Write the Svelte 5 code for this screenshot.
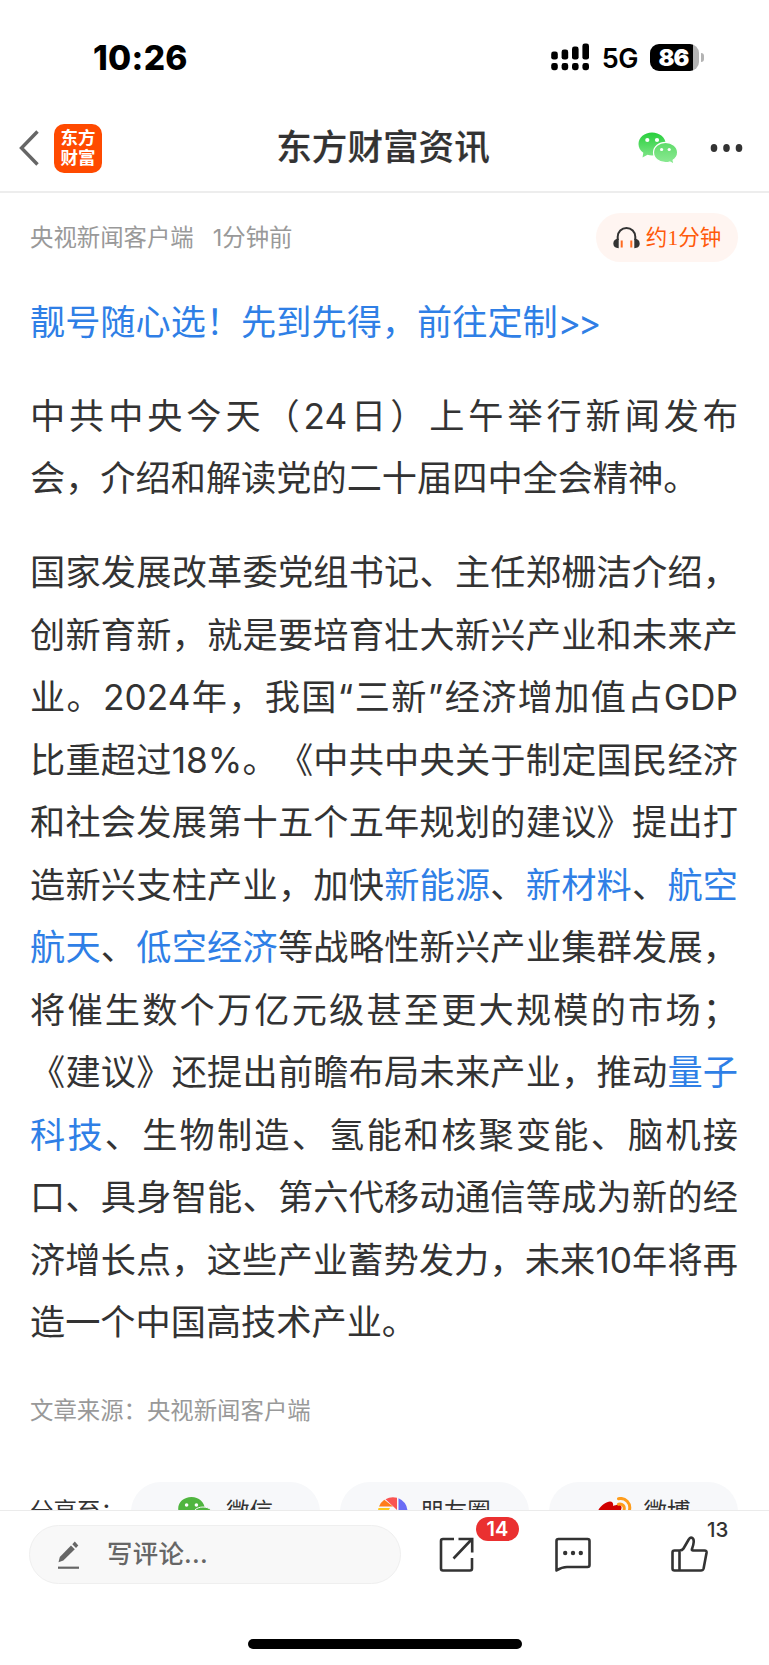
<script>
  const intro = [
    ['中共中央今天（24日）上午举行新闻发布'],
    ['会，介绍和解读党的二十届四中全会精神。']
  ];

  // objects are topic links, plain strings are text
  const body = [
    ['国家发展改革委党组书记、主任郑栅洁介绍，'],
    ['创新育新，就是要培育壮大新兴产业和未来产'],
    ['业。2024年，我国“三新”经济增加值占GDP'],
    ['比重超过18%。《中共中央关于制定国民经济'],
    ['和社会发展第十五个五年规划的建议》提出打'],
    ['造新兴支柱产业，加快', { topic: '新能源' }, '、', { topic: '新材料' }, '、', { topic: '航空' }],
    [{ topic: '航天' }, '、', { topic: '低空经济' }, '等战略性新兴产业集群发展，'],
    ['将催生数个万亿元级甚至更大规模的市场；'],
    ['《建议》还提出前瞻布局未来产业，推动', { topic: '量子' }],
    [{ topic: '科技' }, '、生物制造、氢能和核聚变能、脑机接'],
    ['口、具身智能、第六代移动通信等成为新的经'],
    ['济增长点，这些产业蓄势发力，未来10年将再'],
    ['造一个中国高技术产业。']
  ];

  const paragraphs = [intro, body];
  const shares = ['微信', '朋友圈', '微博'];
  const bars = [8, 10, 13, 16];

  let liked = false;
  let likes = 13;

  function toggleLike() {
    liked = !liked;
    likes += liked ? 1 : -1;
  }
</script>

<div class="phone" lang="zh-CN">
  <div class="status">
    <span class="time">10:26</span>
    <div class="status_right">
      <svg class="signal" width="39" height="28" viewBox="0 0 39 28">
        {#each bars as h, i}
          <rect x={i * 10.4 + 0.2} y={16.6 - h} width="6.6" height={h} rx="2.4" />
          <rect x={i * 10.4 + 0.2} y="20" width="6.6" height="7.2" rx="2.4" />
        {/each}
      </svg>
      <span class="net">5G</span>
      <div class="battery"><span>86</span></div>
      <div class="battery_tip"></div>
    </div>
  </div>

  <header>
    <div class="header_left">
      <svg width="20" height="36" viewBox="0 0 20 36" fill="none" stroke="#666" stroke-width="3.4">
        <path d="M18.5 1.5 2.5 18l16 16.5" />
      </svg>
      <div class="logo"><span>东方</span><span>财富</span></div>
    </div>
    <h1>东方财富资讯</h1>
    <div class="header_right">
      <svg width="40" height="33" viewBox="0 0 40 33">
        <defs>
          <linearGradient id="wx1" x1="0" y1="0" x2="0" y2="1">
            <stop offset="0" stop-color="#28cf3c" />
            <stop offset="1" stop-color="#7fe588" />
          </linearGradient>
          <linearGradient id="wx2" x1="0" y1="0" x2="0" y2="1">
            <stop offset="0" stop-color="#5edb69" />
            <stop offset="1" stop-color="#8eea95" />
          </linearGradient>
        </defs>
        <path fill="url(#wx1)" d="M14 .5C6.500.5.5 5.500.5 12c0 3.600 1.800 6.700 4.800 8.800L4.500 25.500l5-2.700c1.400.4 3 .6 4.500.6 7.500 0 13.700-5 13.700-11.400S21.500.5 14 .5z" />
        <path fill="url(#wx2)" stroke="#fff" stroke-width="1.200" d="M27.500 10.300c-6.500 0-12 4.400-12 10.200s5.500 10.200 12 10.200c1.500 0 3-.2 4.300-.7l4.200 2.200-.9-3.900c2.700-1.900 4.500-4.700 4.500-7.800 0-5.800-5.500-10.200-12.100-10.200z" />
        <g fill="#fff">
          <circle cx="9.300" cy="8" r="2.100" /><circle cx="19" cy="8" r="2.100" />
          <circle cx="23.600" cy="17.500" r="1.600" /><circle cx="31.200" cy="17.500" r="1.600" />
        </g>
      </svg>
      <svg width="33" height="8" viewBox="0 0 33 8" fill="#333">
        <ellipse cx="4" cy="4" rx="3.300" ry="4" /><ellipse cx="16.500" cy="4" rx="3.300" ry="4" /><ellipse cx="29" cy="4" rx="3.300" ry="4" />
      </svg>
    </div>
  </header>

  <main>
    <div class="meta">
      <span class="from">央视新闻客户端</span>
      <span class="from ago">1分钟前</span>
      <button class="listen">
        <svg width="27" height="22" viewBox="0 0 27 22" fill="none">
          <path d="M4.700 13V9.800a8.800 8.800 0 0 1 17.600 0V13" stroke="#333" stroke-width="2" />
          <path d="M5.700 11.800v9.400C2.300 21.200.3 19.400.3 16.500s2-4.700 5.400-4.700zM21.300 11.800v9.400c3.400 0 5.400-1.800 5.400-4.700s-2-4.700-5.400-4.700z" fill="#333" />
          <path d="M8.700 13.500v7M18.300 13.500v7" stroke="#ff6a1f" stroke-width="2" />
        </svg>
        <span>约<i>1</i>分钟</span>
      </button>
    </div>

    <article>
      <p><a href="#promo">靓号随心选！先到先得，前往定制<span class="arrows">&gt;&gt;</span></a></p>
      {#each paragraphs as lines}
        <p>
          {#each lines as line, i}
            <span class="line" class:last={i === lines.length - 1}>{#each line as part}{#if part.topic}<a href="#topic">{part.topic}</a>{:else}{part}{/if}{/each}</span>
          {/each}
        </p>
      {/each}
    </article>

    <div class="source">文章来源：央视新闻客户端</div>

    <div class="share">
      <span class="share_label">分享至：</span>
      {#each shares as name, i}
        <button class="share_item">
          {#if i === 0}
            <svg width="36" height="30" viewBox="0 0 36 30">
              <path fill="#50b53f" d="M13.500 0C6 0 .2 5 .2 11.500c0 3.500 1.800 6.500 4.700 8.600L4 24.500l5-2.600c1.400.4 2.900.6 4.500.6 7.400 0 13.200-5 13.200-11S20.900 0 13.500 0z" />
              <path fill="#50b53f" stroke="#f7f8fa" d="M25 10c-6.500 0-11 4.200-11 9.300S18.500 28.600 25 28.600s11-4.200 11-9.300S31.500 10 25 10z" />
              <circle cx="8.600" cy="8" r="1.800" fill="#fff" /><circle cx="18.400" cy="8" r="1.800" fill="#fff" />
            </svg>
          {:else if i === 1}
            <svg width="30" height="30" viewBox="0 0 30 30">
              <path fill="#fa5452" d="M7.500 2.300A15 15 0 0 1 19 .8V13z" />
              <path fill="#6a6cf5" d="M20.500 1.200A15 15 0 0 1 29.500 14L20.500 17z" />
              <path fill="#ff7d1a" d="M6.300 2.800 15 9.500H1A15 15 0 0 1 6.300 2.800z" />
              <path fill="#ffc817" d="M.5 11H12L4 25A15 15 0 0 1 .5 11z" />
              <path fill="#35a7f5" d="M29.800 15.500A15 15 0 0 1 25 26l-8-8z" />
            </svg>
          {:else}
            <svg width="35" height="30" viewBox="0 0 35 30" fill="none">
              <path fill="#d10000" d="M0 18C0 11 8.500 4.500 13 4.500c3 0 3.500 2.500 3 4.500 3-1.500 8-2.500 8.500 1 .2 1.500-.5 2.500-.5 3 3 1 5 2.500 5 5.500 0 5-6.500 9.500-14.500 9.500S0 24 0 18z" />
              <path d="M21.500 1.700C28.500.3 34 6 32.500 13M21.500 7.200c4-.8 6.500 2 5.600 5.600" stroke="#ff9d1c" stroke-width="3" stroke-linecap="round" />
            </svg>
          {/if}
          <span>{name}</span>
        </button>
      {/each}
    </div>
  </main>

  <footer>
    <div class="tools">
      <div class="comment_box">
        <svg width="22" height="28" viewBox="0 0 22 28" fill="#666">
          <path d="M.5 21.200 1.800 16 13 4.500l3.800 3.800L5.300 19.500z" />
          <path d="M14.300 3.200 16.800.6l3.500 4-2.300 2.500z" />
          <rect x="0" y="25.600" width="21" height="2.200" />
        </svg>
        <span>写评论...</span>
      </div>

      <button class="tool" aria-label="share">
        <svg width="36" height="36" viewBox="0 0 36 36" fill="none" stroke="#333" stroke-width="2.600">
          <path d="M15 2H4Q2 2 2 4v27.500q0 2 2 2h27q2 0 2-2V21" />
          <path d="M19.500 2h13.700v13.500M33 2 14.500 21.500" />
        </svg>
        <span class="badge">14</span>
      </button>
      <button class="tool" aria-label="comments">
        <svg width="36" height="36" viewBox="0 0 36 36" fill="none" stroke="#333" stroke-width="2.600" stroke-linejoin="round">
          <path d="M1.500 33.500V4q0-2 2-2h29q2 0 2 2v24q0 2-2 2H12q-5 0-10.500 3.500z" />
          <g fill="#333" stroke="none"><circle cx="10.200" cy="16" r="2.200" /><circle cx="18" cy="16" r="2.200" /><circle cx="25.800" cy="16" r="2.200" /></g>
        </svg>
      </button>
      <button class="tool" aria-label="like" on:click={toggleLike}>
        <svg width="37" height="37" viewBox="0 0 37 37" fill="none" stroke="#333" stroke-width="2.600" stroke-linejoin="round">
          <path d="M8.500 14.500H3.500q-2 0-2 2v16q0 2 2 2H30q2 0 2.600-2L35.500 17q.4-2.500-2-2.500H22q-1.500 0-1-1.500 1.500-4 1.700-7c.3-5-3.500-5.500-5-2.500L12.500 12.500q-1.200 2-4 2V34.500" />
        </svg>
        <span class="likes">{likes}</span>
      </button>
    </div>
    <div class="home_bar"></div>
  </footer>
</div>

<style>
  :global(body) {
    background: #fff;
  }

  .phone {
    width: 769px;
    height: 1665px;
    display: flex;
    flex-direction: column;
    overflow: hidden;
    color: #333;
    background: #fff;
    font-family: Inter, "Noto Sans CJK SC", sans-serif;
    text-spacing-trim: space-all;
  }

  button {
    border: none;
    padding: 0;
    margin: 0;
    background: none;
    color: inherit;
    font-family: inherit;
  }

  svg {
    display: block;
    flex: none;
  }

  a {
    color: #2f7fe6;
    text-decoration: none;
  }

  .status {
    height: 103px;
    flex: none;
    display: flex;
    justify-content: space-between;
    box-sizing: border-box;
    padding: 43px 65px 0 93px;
    color: #000;
  }

  .time {
    font-size: 33.5px;
    line-height: 30px;
    font-weight: 800;
    letter-spacing: 0.3px;
  }

  .status_right {
    display: flex;
    align-items: center;
    height: 28px;
  }

  .net {
    font-size: 27px;
    font-weight: 600;
    margin: 2px 12px 0 12px;
    letter-spacing: -0.5px;
  }

  .battery {
    width: 49px;
    height: 27px;
    border-radius: 9px;
    background: linear-gradient(to right, #000 43px, #b3b3b3 43px);
    color: #fff;
    font-size: 23.5px;
    line-height: 27px;
    font-weight: 900;
    text-align: center;
    letter-spacing: -0.8px;
    text-indent: -2px;
  }

  .battery_tip {
    width: 3px;
    height: 9px;
    margin-left: 2px;
    background: #b3b3b3;
    border-radius: 0 5px 5px 0;
  }

  header {
    height: 90px;
    flex: none;
    box-sizing: border-box;
    border-bottom: 2px solid #ededed;
    padding: 2px 26px 0 19px;
    display: flex;
    align-items: center;
    justify-content: space-between;
  }

  .header_left,
  .header_right {
    width: 176px;
    display: flex;
    align-items: center;
  }

  .header_left {
    width: 180px;
    gap: 15px;
  }

  .header_right {
    justify-content: flex-end;
    gap: 32px;
  }

  .logo {
    width: 48px;
    height: 49px;
    border-radius: 10px;
    background: #ff4a00;
    color: #fff;
    display: flex;
    flex-direction: column;
    align-items: center;
    justify-content: center;
    font-size: 17.5px;
    line-height: 20px;
    font-weight: 700;
  }

  h1 {
    margin: 0;
    font-size: 35.6px;
    line-height: 50px;
    font-weight: 500;
    -webkit-text-stroke: 0.2px #333;
  }

  main {
    flex: none;
    height: 1317px;
    overflow: hidden;
    box-sizing: border-box;
    padding: 20px 31px 0 30px;
  }

  .meta {
    display: flex;
    align-items: center;
    height: 49px;
    font-size: 23.4px;
    color: #999;
  }

  .from {
    padding-bottom: 4px;
  }

  .ago {
    margin-left: 19px;
  }

  .listen {
    margin-left: auto;
    width: 142px;
    height: 49px;
    border-radius: 25px;
    background: #fff5f1;
    color: #ff5a0a;
    font-size: 21.5px;
    display: flex;
    align-items: center;
    justify-content: center;
  }

  .listen svg {
    margin-right: 6px;
  }

  .listen span {
    padding-bottom: 4px;
  }

  .listen i {
    font-family: "Liberation Serif", serif;
    font-style: normal;
  }

  article {
    padding-top: 29px;
  }

  p {
    margin: 0 0 31.3px;
    font-size: 35.2px;
    line-height: 62.5px;
    white-space: nowrap;
  }

  .arrows {
    letter-spacing: -3px;
  }

  .line {
    display: block;
    height: 62.5px;
    text-align: justify;
    text-align-last: justify;
    white-space: normal;
  }

  .line.last {
    text-align-last: left;
  }

  .source {
    margin-top: 40px;
    font-size: 23.4px;
    line-height: 34px;
    color: #999;
  }

  .share {
    display: flex;
    align-items: center;
    gap: 20px;
    margin-top: 54px;
    height: 60px;
    font-size: 23.5px;
  }

  .share_label {
    width: 81px;
    white-space: nowrap;
    padding-bottom: 4px;
  }

  .share_item {
    flex: 1;
    height: 60px;
    border-radius: 30px;
    background: #f7f8fa;
    display: flex;
    align-items: center;
    justify-content: center;
    gap: 12px;
    font-size: 23.5px;
  }

  .share_item span {
    padding-bottom: 4px;
  }

  footer {
    flex: 1;
    border-top: 1px solid #ebebeb;
    background: #fff;
  }

  .tools {
    display: flex;
    align-items: center;
    padding: 14px 60px 0 29px;
  }

  .comment_box {
    width: 372px;
    height: 59px;
    box-sizing: border-box;
    border: 1px solid #efefef;
    border-radius: 30px;
    background: #f8f8f8;
    color: #666;
    font-size: 25.4px;
    font-weight: 500;
    display: flex;
    align-items: center;
    gap: 27px;
    padding-left: 28px;
    margin-right: 38px;
  }

  .comment_box span {
    padding-bottom: 5px;
    letter-spacing: 0.3px;
  }

  .tool {
    position: relative;
    margin-right: 80px;
  }

  .tool:last-child {
    margin-right: 0;
  }

  .badge {
    position: absolute;
    left: 37px;
    top: -20px;
    width: 43px;
    height: 24px;
    border-radius: 12px;
    background: #ea3030;
    color: #fff;
    font-size: 20px;
    line-height: 24px;
    font-weight: 600;
  }

  .likes {
    position: absolute;
    left: 36px;
    top: -18px;
    font-size: 20.5px;
    line-height: 24px;
    font-weight: 500;
  }

  .home_bar {
    width: 274px;
    height: 10px;
    border-radius: 5px;
    background: #000;
    margin: 55px auto 0;
  }
</style>
